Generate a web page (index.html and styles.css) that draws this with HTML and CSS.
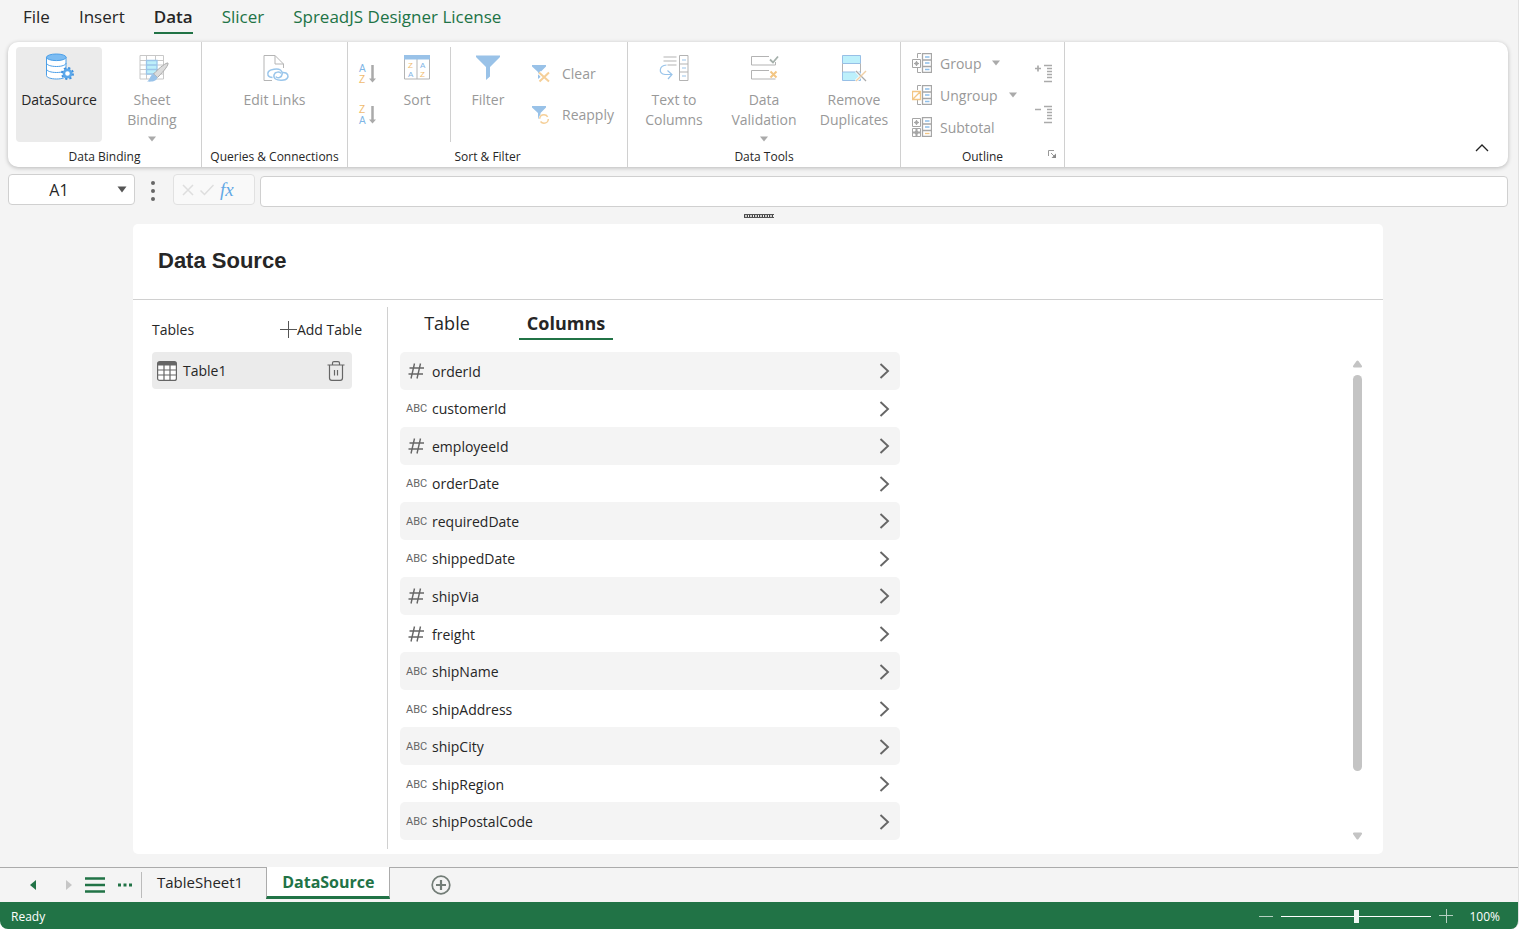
FILE: index.html
```html
<!DOCTYPE html>
<html lang="en">
<head>
  <meta charset="UTF-8" />
  <meta name="viewport" content="width=device-width, initial-scale=1.0"/>
  <title>SpreadJS Designer</title>
  <link rel="stylesheet" href="styles.css">
</head>
<body>
  <svg class="defs" aria-hidden="true">
    <symbol id="caret" viewBox="0 0 10 6"><path d="M1 0.5h8L5 5.5z" fill="currentColor"/></symbol>
    <symbol id="chevron" viewBox="0 0 12 18"><path d="M2.500 2l7.500 7L2.500 16" fill="none" stroke="#666" stroke-width="1.900"/></symbol>
    <symbol id="hash" viewBox="0 0 20 20"><path d="M8.500 2.500L5 17.500M14.500 2.500L11 17.500M3.500 7h14.500M2.500 13h14.500" fill="none" stroke="#666" stroke-width="1.400"/></symbol>
    <symbol id="group-cells" viewBox="0 0 20 20">
      <path d="M10.500 .5h9v19h-9zM10.500 7h9M10.500 13.500h9" fill="none" stroke="#a6a6a6" stroke-width="1.300"/>
    </symbol>
  </svg>

  <div class="app">
    <nav class="menu">
      <a href="#">File</a>
      <a href="#">Insert</a>
      <a href="#" class="active">Data</a>
      <a href="#" class="green">Slicer</a>
      <a href="#" class="green">SpreadJS Designer License</a>
    </nav>

    <div class="ribbon">
      <section class="group binding">
        <div class="tools">
          <button class="big selected">
            <svg class="icon" viewBox="0 0 30 30">
              <path d="M2.500 4v18.500c0 2 4.500 3.500 10 3.500s9.500-1.500 9.500-3.500V4" fill="#fff" stroke="#4b9fe8"/>
              <path d="M2.500 10c0 2 4.500 3.500 10 3.500s9.500-1.500 9.500-3.500M2.500 16c0 2 4.500 3.500 10 3.500s9.500-1.500 9.500-3.500" fill="none" stroke="#4b9fe8"/>
              <ellipse cx="12.300" cy="4.300" rx="9.800" ry="3.300" fill="#7cbcf2" stroke="#4b9fe8"/>
              <circle cx="23.500" cy="20.500" r="5.200" fill="none" stroke="#3d8fdd" stroke-width="2.500" stroke-dasharray="2.080 2.004"/>
              <circle cx="23.500" cy="20.500" r="3.600" fill="#fff" stroke="#5aa7ea" stroke-width="2.600"/>
            </svg>
            <span>DataSource</span>
          </button>
          <button class="big" disabled>
            <svg class="icon" viewBox="0 0 30 30">
              <path d="M3 2.500h23.500v23.500H3zM3 7.500h23.500M3 12h23.500M3 16.500h23.500M3 21h23.500M9.500 2.500V26M18.500 2.500V26" fill="none" stroke="#c8c8c8"/>
              <path d="M9.500 7.500h10.500V21H9.500z" fill="#bdeffa" stroke="#9bc5ea" stroke-width="1.300"/>
              <path d="M9.500 12H20M9.500 16.500H20" stroke="#9bc5ea" stroke-width="1.300"/>
              <path d="M31 10c.5 2-3 7-10.500 14.500l-4-3.500C23 14 29.500 9.500 31 10z" fill="#dcdcdc" stroke="#aaa"/>
              <path d="M20.500 24.500c-1 4-6 4.500-10.500 4 3.500-1.500 2.500-6.500 6.500-7.500z" fill="#9ac3e9"/>
            </svg>
            <span>Sheet<br>Binding</span>
            <svg class="caret"><use href="#caret"/></svg>
          </button>
        </div>
        <h2>Data Binding</h2>
      </section>

      <section class="group queries">
        <div class="tools">
          <button class="big" disabled>
            <svg class="icon" viewBox="0 0 30 30" fill="none" stroke="#b5b5b5">
              <path d="M12 27.500H4V2.500h11l8.500 8.500v4M15 2.500V11h8.500"/>
              <path d="M12.500 24.500c-5 0-5.500-3.500-4-6 1.500-2 9-3.500 12-1.500 2.500 2 2.500 6-1 7.500-1.500.5-3 0-3.500-1" stroke="#9ac6eb" stroke-width="1.500"/>
              <path d="M23 19.500c5 0 6 3.500 4 6-1.500 2-8.500 2.500-11.500.5-3-2.500-1.500-6.500 2-7 1.500-.3 3 .5 3.500 1.500" stroke="#9ac6eb" stroke-width="1.500"/>
            </svg>
            <span>Edit Links</span>
          </button>
        </div>
        <h2>Queries &amp; Connections</h2>
      </section>

      <section class="group sorting">
        <div class="tools">
          <div class="stack">
            <button class="small" disabled aria-label="Sort A to Z">
              <svg width="18" height="24" viewBox="0 0 18 24">
                <text x="1" y="10" class="glyph blue">A</text><text x="1" y="21" class="glyph gold">Z</text>
                <path d="M14.500 3v15" stroke="#aaa" stroke-width="2.500"/><path d="M11 16.500h7l-3.500 4z" fill="#aaa"/>
              </svg>
            </button>
            <button class="small" disabled aria-label="Sort Z to A">
              <svg width="18" height="24" viewBox="0 0 18 24">
                <text x="1" y="10" class="glyph gold">Z</text><text x="1" y="21" class="glyph blue">A</text>
                <path d="M14.500 3v15" stroke="#aaa" stroke-width="2.500"/><path d="M11 16.500h7l-3.500 4z" fill="#aaa"/>
              </svg>
            </button>
          </div>
          <button class="big sort" disabled>
            <svg class="icon" viewBox="0 0 30 30">
              <path d="M2.500 2.500h25v23.500h-25zM15 6v20" fill="none" stroke="#b3b3b3"/>
              <path d="M2 2h26v4.500H2z" fill="#99c2e8"/>
              <text x="6" y="14.500" class="glyph tiny gold">Z</text><text x="6" y="23.500" class="glyph tiny blue">A</text>
              <text x="18" y="14.500" class="glyph tiny blue">A</text><text x="18" y="23.500" class="glyph tiny gold">Z</text>
            </svg>
            <span>Sort</span>
          </button>
          <div class="divider"></div>
          <button class="big filter" disabled>
            <svg class="icon" viewBox="0 0 30 30"><path d="M3 2.500h24v1.500l-10 10v9.500l-4 3.500V14L3 4z" fill="#99c2e8"/></svg>
            <span>Filter</span>
          </button>
          <div class="stack">
            <button class="small" disabled>
              <svg width="20" height="20" viewBox="0 0 20 20">
                <path d="M1 1h14v1.500L9.500 8v5L7 15V8L1 2.500z" fill="#99c2e8"/>
                <path d="M8 8.500l10 9M18 8.500l-9.500 9" stroke="#fff" stroke-width="4"/>
                <path d="M8 8.500l10 9M18 8.500l-9.500 9" stroke="#f5cf98" stroke-width="2"/>
              </svg>
              <span>Clear</span>
            </button>
            <button class="small" disabled>
              <svg width="20" height="20" viewBox="0 0 20 20">
                <path d="M1 1h14v1.500L9.500 8v5L7 14V8L1 2.500z" fill="#99c2e8"/>
                <circle cx="13" cy="14" r="5.500" fill="#fff"/>
                <circle cx="13" cy="14" r="4.300" fill="none" stroke="#f5cf98" stroke-width="1.500" stroke-dasharray="10.500 3"/>
              </svg>
              <span>Reapply</span>
            </button>
          </div>
        </div>
        <h2>Sort &amp; Filter</h2>
      </section>

      <section class="group datatools">
        <div class="tools">
          <button class="big wide" disabled>
            <svg class="icon" viewBox="0 0 30 30" fill="none" stroke="#b3b3b3">
              <path d="M4.500 4h13M4.500 8h13M8.500 12h9"/>
              <path d="M20.500 2.500h8.500v25h-8.500zM20.500 11h8.500M20.500 19h8.500"/>
              <path d="M23 7h4M23 15h4M23 23h4M7.500 12C0 12.500-1 21 6 21.500h6.500M8.500 17.500l4.500 4-4 4.500" stroke="#99c4ea" stroke-width="1.200"/>
            </svg>
            <span>Text to<br>Columns</span>
          </button>
          <button class="big wide" disabled>
            <svg class="icon" viewBox="0 0 30 30" fill="none" stroke="#b3b3b3">
              <path d="M20 3.500H2.500v8.500h24V9M20 17.500H2.500V26h24"/>
              <path d="M21 6.500l3 3 5-6" stroke="#a5b0ab" stroke-width="1.800"/>
              <path d="M21.500 18.500l6 6M27.500 18.500l-6 6" stroke="#f3c684" stroke-width="2"/>
            </svg>
            <span>Data<br>Validation</span>
            <svg class="caret"><use href="#caret"/></svg>
          </button>
          <button class="big wide" disabled>
            <svg class="icon" viewBox="0 0 30 30">
              <path d="M3.500 2.500h18v8h-18zM3.500 19h18v8.500h-18z" fill="#bdf0fb" stroke="#97bfe6"/>
              <path d="M3.500 10.500V19M21.500 10.500V19" stroke="#b3b3b3"/>
              <path d="M17 18l10 10M27 18L17 28" stroke="#fff" stroke-width="3"/>
              <path d="M17 18l10 10" stroke="#aaa" stroke-width="1.200"/><path d="M27 18L17 28" stroke="#f0cfa6" stroke-width="1.400"/>
            </svg>
            <span>Remove<br>Duplicates</span>
          </button>
        </div>
        <h2>Data Tools</h2>
      </section>

      <section class="group outline">
        <div class="tools">
          <div class="rows">
            <button class="small" disabled>
              <svg width="20" height="20" viewBox="0 0 20 20" fill="none" stroke="#a6a6a6">
                <use href="#group-cells"/>
                <path d="M9 .5H5.500V5M9 19.500H5.500V15M.5 6.500h8v8h-8zM4.500 8v5M2 10.500h5"/>
                <circle cx="4.500" cy="10.500" r="1.500"/>
                <path d="M13 4h4.500M13 10h4.500M13 16.500h4.500" stroke="#8fbfe9" stroke-width="1.300"/>
              </svg>
              <span>Group</span>
              <svg class="caret"><use href="#caret"/></svg>
            </button>
            <button class="small" disabled>
              <svg width="20" height="20" viewBox="0 0 20 20" fill="none" stroke="#a6a6a6">
                <use href="#group-cells"/>
                <path d="M9 .5H5.500V5M9 19.500H5.500V15"/>
                <path d="M.5 6.500h8v8h-8zM.5 14.500l8-8" stroke="#f3c684" stroke-width="1.300"/>
                <path d="M13 4h4.500M13 10h4.500M13 16.500h4.500" stroke="#8fbfe9" stroke-width="1.300"/>
              </svg>
              <span>Ungroup</span>
              <svg class="caret"><use href="#caret"/></svg>
            </button>
            <button class="small" disabled>
              <svg width="20" height="20" viewBox="0 0 20 20" fill="none" stroke="#a6a6a6">
                <use href="#group-cells"/>
                <path d="M.5 1.500h8v8h-8zM4.500 3v5M2 5.500h5M.5 11.500h8v8h-8z"/>
                <circle cx="4.500" cy="5.500" r="1.500"/>
                <path d="M4.500 12v7M1 15.500h7" stroke-width="2"/><circle cx="4.500" cy="15.500" r="1.500" fill="#a6a6a6"/>
                <path d="M13 4h4.500M13 10h4.500" stroke="#8fbfe9" stroke-width="1.300"/><path d="M13 16.500h4.500" stroke="#f3c684" stroke-width="1.300"/>
              </svg>
              <span>Subtotal</span>
            </button>
          </div>
          <div class="stack">
            <button class="small" disabled aria-label="Show detail">
              <svg width="18" height="20" viewBox="0 0 18 20" fill="none" stroke="#aaa">
                <path d="M0 5.500h6M3 2.500v6M9 2.500h8M9 18.500h8M12 5.500h5M12 8.500h5M12 11.500h5M12 14.500h5" stroke-width="1.700"/>
              </svg>
            </button>
            <button class="small" disabled aria-label="Hide detail">
              <svg width="18" height="20" viewBox="0 0 18 20" fill="none" stroke="#aaa">
                <path d="M0 5.500h6M9 2.500h8M9 18.500h8M12 5.500h5M12 8.500h5M12 11.500h5M12 14.500h5" stroke-width="1.700"/>
              </svg>
            </button>
          </div>
        </div>
        <h2>Outline</h2>
        <button class="launcher" aria-label="Outline settings">
          <svg width="8" height="8" viewBox="0 0 8 8"><path d="M.5 6V.5H6M3 3l3 3" fill="none" stroke="#999"/><path d="M8 3.500V8H3.500z" fill="#888"/></svg>
        </button>
      </section>

      <button class="collapse" aria-label="Collapse ribbon">
        <svg width="14" height="9" viewBox="0 0 14 9"><path d="M1 8l6-6 6 6" fill="none" stroke="#222" stroke-width="1.300"/></svg>
      </button>
    </div>

    <div class="formula-bar">
      <div class="name-box">
        <input type="text" value="A1" aria-label="Name box">
        <button aria-label="Open name list"><svg width="10" height="7" viewBox="0 0 10 7"><path d="M.5.500h9L5 6.500z" fill="#555"/></svg></button>
      </div>
      <div class="dots"><i></i><i></i><i></i></div>
      <div class="fx-box">
        <button aria-label="Cancel"><svg width="12" height="12" viewBox="0 0 12 12"><path d="M1 1l10 10M11 1L1 11" stroke="#dedede" stroke-width="1.500"/></svg></button>
        <button aria-label="Enter"><svg width="14" height="12" viewBox="0 0 14 12"><path d="M.5 6.500l4 4L13.500 1" fill="none" stroke="#dedede" stroke-width="1.500"/></svg></button>
        <button class="fx">fx</button>
      </div>
      <input class="formula" type="text" aria-label="Formula">
    </div>
    <div class="grip"></div>

    <main class="panel">
      <header><h1>Data Source</h1></header>
      <div class="panel-body">
        <aside>
          <div class="side-head">
            <span>Tables</span>
            <button>
              <svg width="17" height="17" viewBox="0 0 17 17"><path d="M8.500 0v17M0 8.500h17" stroke="#555"/></svg>Add Table
            </button>
          </div>
          <div class="table-item">
            <svg width="20" height="20" viewBox="0 0 20 20"><rect x=".6" y=".6" width="18.800" height="18.800" rx="2" fill="#fff" stroke="#666" stroke-width="1.200"/><path d="M1 1h18v3.500H1z" fill="#666"/><path d="M1 9h18M1 14h18M7 4v15M13 4v15" stroke="#666" stroke-width="1.200"/></svg>
            <span>Table1</span>
            <button aria-label="Delete table">
              <svg width="18" height="20" viewBox="0 0 18 20"><path d="M.5 4h17M5.500 4V2q0-1.300 1.500-1.300h4q1.500 0 1.500 1.300v2M2.500 4v13q0 2.300 2.300 2.300h8.400q2.300 0 2.300-2.300V4M7.500 9v5.500M10.500 9v5.500" fill="none" stroke="#666" stroke-width="1.200"/></svg>
            </button>
          </div>
        </aside>

        <div class="detail">
          <div class="tabs" role="tablist">
            <button role="tab">Table</button>
            <button role="tab" class="active" aria-selected="true">Columns</button>
          </div>
          <div class="scroll-area">
            <ul class="columns"></ul>
            <div class="scrollbar">
              <svg width="9" height="8" viewBox="0 0 9 8"><path d="M3.500 1q1-1 2 0L9 6q.2 1.500-1 1.500H1Q-.2 7.500 0 6z" fill="#c4c4c4"/></svg>
              <div class="track"><div class="thumb"></div></div>
              <svg width="9" height="8" viewBox="0 0 9 8"><path d="M3.500 7q1 1 2 0L9 2Q9.200.5 8 .5H1Q-.2.500 0 2z" fill="#c4c4c4"/></svg>
            </div>
          </div>
        </div>
      </div>
    </main>

    <div class="sheet-bar">
      <div class="sheet-nav">
        <button aria-label="Previous sheet"><svg width="6" height="10" viewBox="0 0 6 10"><path d="M6 0v10L0 5z" fill="#217346"/></svg></button>
        <button aria-label="Next sheet"><svg width="6" height="10" viewBox="0 0 6 10"><path d="M0 0v10l6-5z" fill="#c6c6c6"/></svg></button>
        <button aria-label="All sheets"><svg width="20" height="16" viewBox="0 0 20 16"><path d="M0 1.500h20M0 8h20M0 14.500h20" stroke="#217346" stroke-width="2.400"/></svg></button>
        <button aria-label="More sheets"><svg width="14" height="4" viewBox="0 0 14 4"><path d="M0 .5h3v3H0zM5.500.500h3v3h-3zM11 .5h3v3h-3z" fill="#217346"/></svg></button>
      </div>
      <button class="sheet">TableSheet1</button>
      <button class="sheet active">DataSource</button>
      <button class="add-sheet" aria-label="Add sheet">
        <svg width="20" height="20" viewBox="0 0 20 20"><circle cx="10" cy="10" r="8.800" fill="none" stroke="#737d77" stroke-width="1.700"/><path d="M10 5v10M5 10h10" stroke="#737d77" stroke-width="2.200"/></svg>
      </button>
    </div>

    <footer>
      <span>Ready</span>
      <div class="zoom">
        <button aria-label="Zoom out"><svg width="14" height="14" viewBox="0 0 14 14"><path d="M0 7.500h14" stroke="#b5d0c1"/></svg></button>
        <input type="range" min="0" max="100" value="50" aria-label="Zoom">
        <button aria-label="Zoom in"><svg width="14" height="14" viewBox="0 0 14 14"><path d="M0 6.500h14M7.500 0v14" stroke="#b5d0c1"/></svg></button>
        <span class="percent">100%</span>
      </div>
    </footer>
  </div>

  <script>
    let list = document.querySelector(".columns");
    let columns = [
      ["orderId", "number"],
      ["customerId", "text"],
      ["employeeId", "number"],
      ["orderDate", "text"],
      ["requiredDate", "text"],
      ["shippedDate", "text"],
      ["shipVia", "number"],
      ["freight", "number"],
      ["shipName", "text"],
      ["shipAddress", "text"],
      ["shipCity", "text"],
      ["shipRegion", "text"],
      ["shipPostalCode", "text"]
    ];

    columns.forEach(([name, type]) => {
      let icon = type == "number" ? `<svg width="20" height="20"><use href="#hash"/></svg>` : "ABC";
      let row = document.createElement("li");
      row.innerHTML = `<button><span class="type">${icon}</span><span class="name">${name}</span><svg width="12" height="18"><use href="#chevron"/></svg></button>`;
      list.appendChild(row);
    });
  </script>
</body>
</html>
```

FILE: styles.css
```css
* {
  margin: 0;
  padding: 0;
  box-sizing: border-box;
}

body {
  background: #fff;
  color: #262626;
  font-family: "Open Sans", "Noto Sans", sans-serif;
  font-size: 14px;
}

button {
  border: 0;
  background: none;
  color: inherit;
  font: inherit;
  cursor: pointer;
}

button:disabled {
  color: #999;
  cursor: default;
}

svg {
  display: block;
  flex-shrink: 0;
}

.defs {
  position: absolute;
  width: 0;
  height: 0;
}

.app {
  display: flex;
  flex-direction: column;
  min-height: 100vh;
  background: #f4f4f4;
  border-right: 1px solid #e1e1e1;
  border-radius: 0 0 8px 8px;
  overflow: hidden;
}

/* menu */
.menu {
  display: flex;
  gap: 29px;
  height: 42px;
  padding-left: 23px;
}

.menu a {
  height: 34px;
  line-height: 34px;
  font-size: 17px;
  color: #262626;
  text-decoration: none;
}

.menu a.green {
  color: #217346;
}

.menu a.active {
  font-weight: 600;
  border-bottom: 2px solid #217346;
}

/* ribbon */
.ribbon {
  display: flex;
  position: relative;
  height: 125px;
  margin: 0 10px 0 8px;
  background: #fff;
  border-radius: 10px;
  box-shadow: 0 1px 4px rgba(0, 0, 0, 0.25);
}

.group {
  display: flex;
  flex-direction: column;
  position: relative;
  border-right: 1px solid #d0d0d0;
}

.group h2 {
  font-size: 12px;
  font-weight: 400;
  line-height: 16px;
  padding-top: 6px;
  text-align: center;
  white-space: nowrap;
}

.tools {
  display: flex;
  height: 101px;
  padding-top: 5px;
}

.binding {
  width: 194px;
}

.binding .tools {
  gap: 7px;
  padding-left: 8px;
}

.queries {
  width: 146px;
}

.queries .tools {
  justify-content: center;
}

.sorting {
  width: 280px;
}

.sorting .tools {
  padding-left: 10px;
}

.datatools {
  width: 273px;
}

.datatools .tools {
  padding-left: 1px;
}

.outline {
  width: 164px;
}

.outline .tools {
  padding-left: 11px;
}

.big {
  display: flex;
  flex-direction: column;
  align-items: center;
  width: 86px;
  height: 95px;
  padding-top: 6px;
  border-radius: 4px;
  line-height: 20px;
}

.big.selected {
  background: #ebebeb;
}

.big.sort {
  width: 66px;
  margin-left: 8px;
}

.big.filter {
  width: 74px;
}

.big.wide {
  width: 90px;
}

.icon {
  width: 30px;
  height: 30px;
  margin-bottom: 7px;
  overflow: visible;
}

.caret {
  width: 10px;
  height: 6px;
  color: #aaa;
}

.big .caret {
  margin-top: 6px;
}

.small .caret {
  margin-left: 2px;
}

.divider {
  width: 1px;
  height: 95px;
  background: #d0d0d0;
}

.small {
  display: flex;
  align-items: center;
  gap: 8px;
  height: 31px;
  white-space: nowrap;
}

.sorting .small {
  gap: 11px;
}

.stack {
  display: flex;
  flex-direction: column;
  gap: 10px;
  padding-top: 10px;
}

.sorting .stack {
  padding-top: 11px;
}

.filter + .stack {
  margin-left: 6px;
}

.rows {
  width: 123px;
}

.rows .small {
  height: 32px;
}

.glyph {
  font: 10px "Liberation Sans", sans-serif;
}

.glyph.tiny {
  font-size: 8px;
}

.blue {
  fill: #7fb6e6;
}

.gold {
  fill: #f0bb6e;
}

.launcher {
  position: absolute;
  right: 8px;
  bottom: 9px;
}

.collapse {
  position: absolute;
  right: 19px;
  bottom: 15px;
}

/* formula bar */
.formula-bar {
  display: flex;
  height: 33px;
  margin: 7px 10px 0 8px;
}

.name-box,
.fx-box {
  display: flex;
  align-items: center;
  height: 31px;
  border: 1px solid #d0d0d0;
  border-radius: 4px;
}

.name-box {
  width: 127px;
  padding-right: 7px;
  background: #fff;
}

.name-box input {
  flex: 1;
  min-width: 0;
  padding-right: 8px;
  border: 0;
  outline: none;
  background: none;
  color: #262626;
  font: 16px "Open Sans", sans-serif;
  text-align: center;
}

.dots {
  display: flex;
  flex-direction: column;
  align-items: center;
  justify-content: center;
  gap: 4px;
  width: 38px;
  height: 33px;
  padding-right: 2px;
}

.dots i {
  width: 4px;
  height: 4px;
  border-radius: 50%;
  background: #666;
}

.fx-box {
  gap: 6px;
  width: 82px;
  padding-left: 8px;
  border-color: #e1e1e1;
  background: #f9f9f9;
}

.fx {
  color: #62a8e5;
  font: italic 19px/24px "Liberation Serif", serif;
}

.formula {
  flex: 1;
  align-self: flex-end;
  height: 31px;
  margin-left: 5px;
  padding: 0 8px;
  border: 1px solid #d0d0d0;
  border-radius: 4px;
  font: 14px "Open Sans", sans-serif;
}

.grip {
  width: 30px;
  height: 4px;
  margin: 7px auto 6px;
  border: 1px solid #555;
  border-width: 1px 0;
  background: repeating-linear-gradient(90deg, #444 0 1px, #ccc 1px 3px, #444 3px 4px, #f4f4f4 4px 5px);
}

/* data source panel */
.panel {
  display: flex;
  flex: 1;
  flex-direction: column;
  align-self: center;
  width: calc(100% - 268px);
  margin: 0 2px 13px 0;
  background: #fff;
  border-radius: 5px;
}

.panel header {
  height: 76px;
  padding-left: 25px;
  border-bottom: 1px solid #d0d0d0;
}

.panel h1 {
  font: 700 22px/74px "Liberation Sans", sans-serif;
}

.panel-body {
  display: flex;
  flex: 1;
}

aside {
  width: 255px;
  margin: 7px 0 5px;
  padding: 11px 25px 0 19px;
  border-right: 1px solid #d0d0d0;
}

.side-head {
  display: flex;
  align-items: center;
  justify-content: space-between;
  width: 210px;
  height: 22px;
  margin-bottom: 12px;
}

.side-head button {
  display: flex;
  align-items: center;
}

.table-item {
  display: flex;
  align-items: center;
  gap: 6px;
  width: 200px;
  height: 37px;
  padding: 0 7px 0 5px;
  border-radius: 4px;
  background: #ebebeb;
}

.table-item button {
  margin-left: auto;
}

.detail {
  display: flex;
  flex: 1;
  flex-direction: column;
  padding: 8px 21px 14px 12px;
}

.tabs {
  display: flex;
  gap: 25px;
  margin-bottom: 12px;
}

.tabs button {
  width: 94px;
  height: 32px;
  border-bottom: 2px solid transparent;
  font-size: 18px;
  line-height: 30px;
}

.tabs .active {
  border-color: #217346;
  font-weight: 700;
}

.scroll-area {
  display: flex;
  flex: 1;
  justify-content: space-between;
}

.columns {
  display: grid;
  grid-auto-rows: minmax(37px, 1fr);
  width: 500px;
  list-style: none;
}

.columns li {
  display: flex;
  border-radius: 5px;
}

.columns li:nth-child(odd) {
  background: #f4f4f4;
}

.columns button {
  display: flex;
  flex: 1;
  align-items: center;
  padding: 1px 10px 0 6px;
  text-align: left;
}

.type {
  width: 26px;
  color: #666;
  font: 11px "Liberation Sans Narrow", "Roboto", sans-serif;
}

.name {
  flex: 1;
}

.scrollbar {
  display: flex;
  flex-direction: column;
  gap: 7px;
  width: 9px;
  padding-top: 8px;
}

.track {
  flex: 1;
}

.thumb {
  height: 88%;
  border-radius: 5px;
  background: #c4c4c4;
}

/* sheet tabs */
.sheet-bar {
  display: flex;
  height: 35px;
  border-top: 1px solid #ababab;
}

.sheet-nav {
  display: flex;
  align-items: center;
  gap: 13px;
  margin: 4px 0;
  padding: 0 9px 0 30px;
  border-right: 1px solid #bbb;
}

.sheet-nav button:first-child {
  margin-right: 17px;
}

.sheet {
  height: 28px;
  padding: 0 15px;
  font-size: 15px;
}

.sheet.active {
  height: 32px;
  margin: -1px 0 0 8px;
  border: 1px solid #ababab;
  border-width: 0 1px 3px;
  border-bottom-color: #217346;
  background: #fff;
  color: #217346;
  font-size: 16px;
  font-weight: 700;
}

.add-sheet {
  margin-left: 41px;
}

footer {
  display: flex;
  align-items: center;
  justify-content: space-between;
  height: 27px;
  padding: 1px 18px 0 11px;
  background: #217346;
  color: #fff;
  font-size: 12px;
}

.zoom {
  display: flex;
  align-items: center;
  gap: 8px;
}

.zoom input {
  appearance: none;
  width: 150px;
  height: 1px;
  background: #fff;
}

.zoom input::-webkit-slider-thumb {
  appearance: none;
  width: 5px;
  height: 13px;
  background: #f0f7f3;
}

.percent {
  margin-left: 8px;
}
```
